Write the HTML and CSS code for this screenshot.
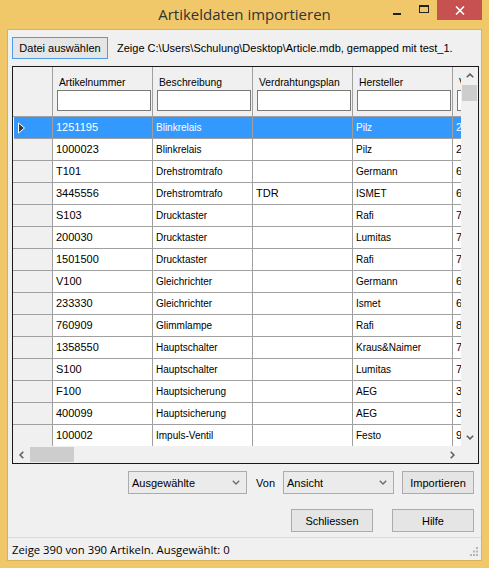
FILE: index.html
```html
<!DOCTYPE html>
<html lang="de">
<head>
<meta charset="utf-8">
<title>Artikeldaten importieren</title>
<link rel="stylesheet" href="styles.css">
</head>
<body>
<div class="window">
  <div class="titlebar">
    <div></div>
    <div class="title">Artikeldaten importieren</div>
    <div class="caption">
      <div class="cbtn cmin"><svg width="8" height="2" viewBox="0 0 8 2"><rect x="0" y="0" width="8" height="2" fill="#222"/></svg></div>
      <div class="cbtn cmax"><svg width="10" height="8" viewBox="0 0 10 8"><rect x="0.5" y="1" width="9" height="6.5" fill="none" stroke="#222" stroke-width="1"/><rect x="0" y="0" width="10" height="2" fill="#222"/></svg></div>
      <div class="cbtn cclose"><svg width="10" height="9" viewBox="0 0 10 9"><path d="M1 0.5 L9 8.5 M9 0.5 L1 8.5" stroke="#fff" stroke-width="1.6" fill="none"/></svg></div>
    </div>
  </div>

  <div class="client">
    <div class="toprow">
      <button class="btn btn-focus btn-file">Datei auswählen</button>
      <span class="path">Zeige C:\Users\Schulung\Desktop\Article.mdb, gemapped mit test_1.</span>
    </div>

    <div class="grid">
      <div class="viewport">
        <div class="row head">
          <div class="cell rh"></div>
          <div class="cell hc"><div class="hl">Artikelnummer</div><div class="filter"></div></div>
          <div class="cell hc"><div class="hl">Beschreibung</div><div class="filter"></div></div>
          <div class="cell hc"><div class="hl">Verdrahtungsplan</div><div class="filter"></div></div>
          <div class="cell hc"><div class="hl">Hersteller</div><div class="filter"></div></div>
          <div class="cell hc"><div class="hl">Verkaufspreis</div><div class="filter"></div></div>
        </div>

        <div class="row sel">
          <div class="cell rh"><svg class="cur" width="9" height="12" viewBox="0 0 9 12"><polygon points="1.5,1 7.5,6 1.5,11" fill="#3a3a3a" stroke="#fff" stroke-width="1"/></svg></div>
          <div class="cell c1">1251195</div><div class="cell c2">Blinkrelais</div><div class="cell c3"></div><div class="cell c4">Pilz</div><div class="cell c5">25</div>
        </div>
        <div class="row"><div class="cell rh"></div><div class="cell c1">1000023</div><div class="cell c2">Blinkrelais</div><div class="cell c3"></div><div class="cell c4">Pilz</div><div class="cell c5">25</div></div>
        <div class="row"><div class="cell rh"></div><div class="cell c1">T101</div><div class="cell c2">Drehstromtrafo</div><div class="cell c3"></div><div class="cell c4">Germann</div><div class="cell c5">63</div></div>
        <div class="row"><div class="cell rh"></div><div class="cell c1">3445556</div><div class="cell c2">Drehstromtrafo</div><div class="cell c3">TDR</div><div class="cell c4">ISMET</div><div class="cell c5">60</div></div>
        <div class="row"><div class="cell rh"></div><div class="cell c1">S103</div><div class="cell c2">Drucktaster</div><div class="cell c3"></div><div class="cell c4">Rafi</div><div class="cell c5">70</div></div>
        <div class="row"><div class="cell rh"></div><div class="cell c1">200030</div><div class="cell c2">Drucktaster</div><div class="cell c3"></div><div class="cell c4">Lumitas</div><div class="cell c5">75</div></div>
        <div class="row"><div class="cell rh"></div><div class="cell c1">1501500</div><div class="cell c2">Drucktaster</div><div class="cell c3"></div><div class="cell c4">Rafi</div><div class="cell c5">72</div></div>
        <div class="row"><div class="cell rh"></div><div class="cell c1">V100</div><div class="cell c2">Gleichrichter</div><div class="cell c3"></div><div class="cell c4">Germann</div><div class="cell c5">63</div></div>
        <div class="row"><div class="cell rh"></div><div class="cell c1">233330</div><div class="cell c2">Gleichrichter</div><div class="cell c3"></div><div class="cell c4">Ismet</div><div class="cell c5">60</div></div>
        <div class="row"><div class="cell rh"></div><div class="cell c1">760909</div><div class="cell c2">Glimmlampe</div><div class="cell c3"></div><div class="cell c4">Rafi</div><div class="cell c5">80</div></div>
        <div class="row"><div class="cell rh"></div><div class="cell c1">1358550</div><div class="cell c2">Hauptschalter</div><div class="cell c3"></div><div class="cell c4">Kraus&amp;Naimer</div><div class="cell c5">75</div></div>
        <div class="row"><div class="cell rh"></div><div class="cell c1">S100</div><div class="cell c2">Hauptschalter</div><div class="cell c3"></div><div class="cell c4">Lumitas</div><div class="cell c5">70</div></div>
        <div class="row"><div class="cell rh"></div><div class="cell c1">F100</div><div class="cell c2">Hauptsicherung</div><div class="cell c3"></div><div class="cell c4">AEG</div><div class="cell c5">35</div></div>
        <div class="row"><div class="cell rh"></div><div class="cell c1">400099</div><div class="cell c2">Hauptsicherung</div><div class="cell c3"></div><div class="cell c4">AEG</div><div class="cell c5">35</div></div>
        <div class="row"><div class="cell rh"></div><div class="cell c1">100002</div><div class="cell c2">Impuls-Ventil</div><div class="cell c3"></div><div class="cell c4">Festo</div><div class="cell c5">95</div></div>
      </div>

      <div class="vscroll">
        <div class="sbtn"><svg width="8" height="5" viewBox="0 0 8 5"><polyline points="0.8,4.3 4,1.1 7.2,4.3" fill="none" stroke="#606060" stroke-width="1.6"/></svg></div>
        <div class="vtrack"><div class="vthumb"></div></div>
        <div class="sbtn"><svg width="8" height="5" viewBox="0 0 8 5"><polyline points="0.8,0.7 4,3.9 7.2,0.7" fill="none" stroke="#606060" stroke-width="1.6"/></svg></div>
      </div>
      <div class="hscroll">
        <div class="sbtn"><svg width="5" height="8" viewBox="0 0 5 8"><polyline points="4.3,0.8 1.1,4 4.3,7.2" fill="none" stroke="#606060" stroke-width="1.6"/></svg></div>
        <div class="htrack"><div class="hthumb"></div></div>
        <div class="sbtn"><svg width="5" height="8" viewBox="0 0 5 8"><polyline points="0.7,0.8 3.9,4 0.7,7.2" fill="none" stroke="#606060" stroke-width="1.6"/></svg></div>
      </div>
      <div class="corner"></div>
    </div>

    <div class="actions">
      <div class="combo combo-sel"><span>Ausgewählte</span><svg width="8" height="5" viewBox="0 0 8 5"><polyline points="0.8,0.7 4,3.9 7.2,0.7" fill="none" stroke="#6d6d6d" stroke-width="1.4"/></svg></div>
      <span class="von">Von</span>
      <div class="combo combo-view"><span>Ansicht</span><svg width="8" height="5" viewBox="0 0 8 5"><polyline points="0.8,0.7 4,3.9 7.2,0.7" fill="none" stroke="#6d6d6d" stroke-width="1.4"/></svg></div>
      <button class="btn btn-import">Importieren</button>
    </div>

    <div class="actions2">
      <button class="btn btn-wide">Schliessen</button>
      <button class="btn btn-wide">Hilfe</button>
    </div>

    <div class="status">
      <span class="status-text">Zeige 390 von 390 Artikeln. Ausgewählt: 0</span>
      <svg class="grip" width="9" height="10" viewBox="0 0 9 10">
        <rect x="6" y="0" width="2" height="2" fill="#b5b5b5"/>
        <rect x="3" y="3.5" width="2" height="2" fill="#b5b5b5"/>
        <rect x="6" y="3.5" width="2" height="2" fill="#b5b5b5"/>
        <rect x="0" y="7" width="2" height="2" fill="#b5b5b5"/>
        <rect x="3" y="7" width="2" height="2" fill="#b5b5b5"/>
        <rect x="6" y="7" width="2" height="2" fill="#b5b5b5"/>
      </svg>
    </div>
  </div>
</div>
</body>
</html>
```

FILE: styles.css
```css
* { box-sizing: border-box; }
html, body { margin: 0; padding: 0; }
body {
  width: 489px;
  height: 568px;
  overflow: hidden;
  font-family: "Liberation Sans", Arial, sans-serif;
  font-size: 11px;
  color: #000;
}

.window {
  width: 489px;
  height: 568px;
  background: #f0c86a;
  display: flex;
  flex-direction: column;
}

/* title bar */
.titlebar {
  height: 29px;
  flex: none;
  display: grid;
  grid-template-columns: 1fr auto 1fr;
}
.title {
  font-family: "Open Sans", "Noto Sans", sans-serif;
  font-size: 15px;
  line-height: 29px;
  color: #333;
  white-space: nowrap;
}
.caption {
  justify-self: end;
  align-self: start;
  display: flex;
  margin-right: 7px;
}
.cbtn {
  height: 20px;
  display: flex;
  align-items: center;
  justify-content: center;
}
.cmin { width: 26px; padding-top: 7px; }
.cmax { width: 27px; padding-bottom: 2px; }
.cclose { width: 45px; background: #c75050; }

/* client area */
.client {
  flex: 1;
  margin: 0 7px 7px 7px;
  border: 1px solid #d8b35e;
  background: #f0f0f0;
  display: flex;
  flex-direction: column;
}

.toprow {
  height: 29px;
  padding: 7px 0 0 4px;
  display: flex;
  align-items: center;
  flex: none;
}
.btn {
  font-family: "Liberation Sans", Arial, sans-serif;
  font-size: 11px;
  color: #000;
  background: #e5e5e5;
  border: 1px solid #acacac;
  height: 23px;
  padding: 0;
  margin: 0;
}
.btn-file {
  width: 96px;
  height: 22px;
}
.btn-focus { border-color: #4c9be8; }
.path {
  margin-left: 9px;
  white-space: nowrap;
}

/* data grid */
.grid {
  flex: none;
  margin: 7px 0 0 4px;
  width: 467px;
  height: 398px;
  border: 1px solid #1a1a1a;
  display: grid;
  grid-template-columns: 448px 17px;
  grid-template-rows: 379px 17px;
  background: #f0f0f0;
}
.viewport {
  overflow: hidden;
  background: #fff;
}
.row {
  display: grid;
  grid-template-columns: 40px 100px 100px 100px 100px 100px;
  width: 540px;
  height: 22px;
}
.cell {
  border-right: 1px solid #a0a0a0;
  border-bottom: 1px solid #a0a0a0;
  padding-left: 3px;
  line-height: 21px;
  white-space: nowrap;
  overflow: hidden;
  background: #fff;
}
.cell.rh {
  background: #f0f0f0;
  padding-left: 0;
  display: flex;
  align-items: center;
}
.c1, .c3, .c5 { font-size: 11px; }
.c2, .c4 { font-size: 10px; }

.row.head { height: 50px; }
.row.head .cell { background: #f0f0f0; }
.hc { padding-left: 0; }
.hl {
  font-size: 10.3px;
  line-height: 13px;
  padding: 9px 0 0 6px;
  height: 23px;
}
.filter {
  margin-left: 4px;
  width: 94px;
  height: 21px;
  border: 1px solid #7a7a7a;
  background: #fff;
}

.row.sel .cell { background: #3399ff; color: #fff; }
.row.sel .cell.rh { margin-left: 1px; }
.cur { margin-left: 3px; }

/* scrollbars */
.vscroll {
  display: flex;
  flex-direction: column;
  background: #f0f0f0;
}
.sbtn {
  width: 17px;
  height: 17px;
  flex: none;
  display: flex;
  align-items: center;
  justify-content: center;
}
.vtrack { flex: 1; padding: 1px 1px 0 0; }
.vthumb { width: 15px; height: 16px; background: #cdcdcd; margin-left: 1px; }
.hscroll {
  display: flex;
  background: #f0f0f0;
}
.htrack { flex: 1; padding: 1px 0 0 0; }
.hthumb { width: 44px; height: 15px; background: #cdcdcd; }
.corner { background: #f0f0f0; }

/* bottom action rows */
.actions {
  flex: none;
  margin-top: 7px;
  height: 23px;
  padding-right: 7px;
  display: flex;
  justify-content: flex-end;
  align-items: center;
}
.combo {
  height: 23px;
  border: 1px solid #acacac;
  background: #ebebeb;
  display: flex;
  align-items: center;
  justify-content: space-between;
  padding: 0 6px 0 3px;
}
.combo-sel { width: 119px; }
.combo-view { width: 111px; }
.von { margin: 0 8px 0 9px; }
.btn-import { width: 72px; margin-left: 8px; }

.actions2 {
  flex: none;
  margin-top: 15px;
  height: 23px;
  padding-right: 7px;
  display: flex;
  justify-content: flex-end;
  gap: 19px;
}
.btn-wide { width: 82px; }

.status {
  flex: none;
  margin-top: 5px;
  height: 23px;
  border-top: 1px solid #dcdcdc;
  display: flex;
  align-items: center;
  justify-content: space-between;
  padding: 0 2px 0 4px;
}
.status-text {
  font-family: "Open Sans", "Noto Sans", sans-serif;
  font-size: 11.3px;
  white-space: nowrap;
}
.grip { margin-top: 6px; }
```
